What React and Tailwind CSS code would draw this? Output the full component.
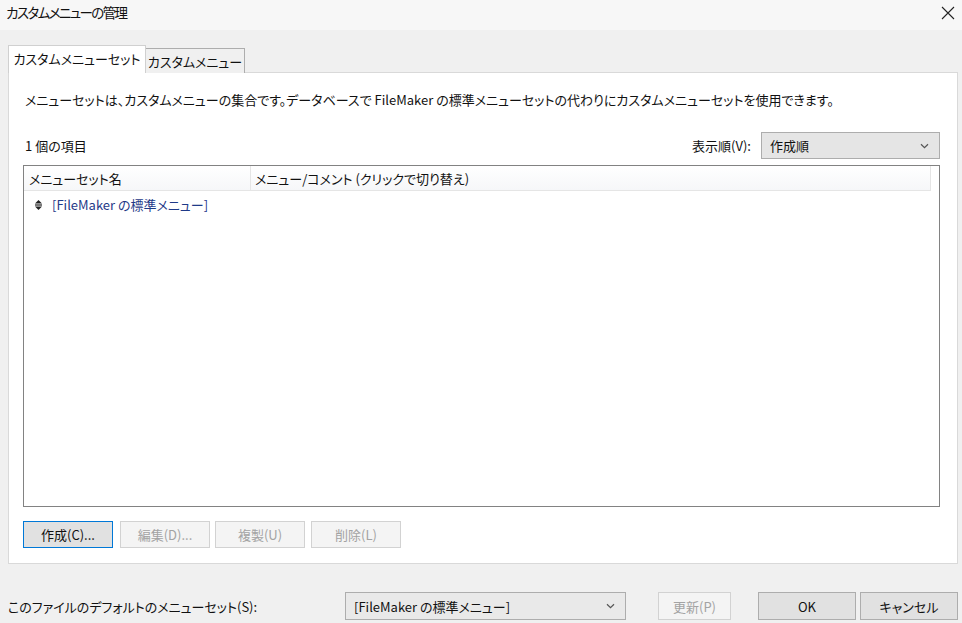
import React from "react";

const font = {
  fontFamily: '"Noto Sans CJK JP", "Noto Sans", sans-serif',
};

function Chevron() {
  return (
    <svg width="9" height="6" viewBox="0 0 9 6" className="shrink-0">
      <path d="M1 1.2 L4.5 4.6 L8 1.2" fill="none" stroke="#555" strokeWidth="1.2" />
    </svg>
  );
}

function Btn({ children, primary, disabled, className = "" }) {
  let cls =
    "flex items-center justify-center text-[13px] leading-none border whitespace-nowrap " + className + " ";
  if (disabled) cls += "bg-[#f4f4f4] border-[#d2d2d2] text-[#a3a3a3]";
  else if (primary) cls += "bg-[#e1e1e1] border-[#0078d7] text-[#111]";
  else cls += "bg-[#e1e1e1] border-[#adadad] text-[#111]";
  return <div className={cls}>{children}</div>;
}

export default function App() {
  return (
    <div
      className="w-[962px] h-[623px] bg-[#f0f0f0] flex flex-col overflow-hidden text-[#111] whitespace-nowrap [font-feature-settings:'palt']"
      style={font}
    >
      {/* title bar */}
      <div className="h-[30px] bg-[#f7f7f7] flex items-center justify-between pl-[6px] pr-[7px]">
        <div className="text-[13.5px] tracking-[-1.6px] leading-none text-[#111] -mt-[4px]">カスタムメニューの管理</div>
        <svg width="14" height="14" viewBox="0 0 14 14" className="-mt-[4px]">
          <path d="M1 1 L13 13 M13 1 L1 13" stroke="#222" strokeWidth="1.1" />
        </svg>
      </div>

      {/* tabs */}
      <div className="mt-[15px] pl-[8px] flex items-end h-[28px] relative z-10">
        <div className="h-[28px] w-[138px] bg-white border border-b-0 border-[#d0d0d0] flex items-center justify-center text-[13px] leading-none pb-[2px]">
          カスタムメニューセット
        </div>
        <div className="h-[25px] w-[99px] bg-[#f0f0f0] border border-l-0 border-b-0 border-[#adadad] flex items-center justify-center text-[13px] leading-none">
          カスタムメニュー
        </div>
      </div>

      {/* panel */}
      <div className="ml-[8px] w-[950px] h-[492px] -mt-[1px] bg-white border border-[#d9d9d9] flex flex-col pl-[14px] pr-[17px]">
        <div className="mt-[15px] h-[22px] flex items-center pl-[2px] text-[13px] leading-none">
          メニューセットは、カスタムメニューの集合です。データベースで FileMaker の標準メニューセットの代わりにカスタムメニューセットを使用できます。
        </div>

        <div className="mt-[22px] h-[27px] flex items-center justify-between">
          <div className="pl-[2px] text-[13px] leading-none">1 個の項目</div>
          <div className="flex items-center gap-[10px]">
            <span className="text-[13px] leading-none">表示順(V):</span>
            <div className="w-[179px] h-[27px] bg-[#e5e5e5] border border-[#adadad] flex items-center justify-between pl-[8px] pr-[10px]">
              <span className="text-[13px] leading-none">作成順</span>
              <Chevron />
            </div>
          </div>
        </div>

        {/* list */}
        <div className="mt-[6px] h-[342px] border border-[#828282] bg-white flex flex-col">
          <div className="h-[25px] flex border-b border-[#e5e5e5] bg-gradient-to-b from-white to-[#f6f7f9] mr-[8px] border-r">
            <div className="w-[227px] border-r border-[#e5e5e5] flex items-center pl-[5px] text-[13px] leading-none">
              メニューセット名
            </div>
            <div className="flex-1 flex items-center pl-[4px] text-[13px] leading-none">
              メニュー/コメント (クリックで切り替え)
            </div>
          </div>
          <div className="h-[27px] flex items-center pl-[11px] gap-[10px]">
            <svg width="7" height="10" viewBox="0 0 7 10">
              <path d="M3.5 0 L7 3.5 L0 3.5 Z" fill="#222" />
              <rect x="0" y="4.4" width="7" height="1.2" fill="#222" />
              <path d="M0 6.5 L7 6.5 L3.5 10 Z" fill="#222" />
            </svg>
            <span className="text-[13px] leading-none text-[#1f3a88]">[FileMaker の標準メニュー]</span>
          </div>
        </div>

        {/* buttons */}
        <div className="mt-[14px] flex">
          <Btn primary className="w-[90px] h-[27px]">作成(C)...</Btn>
          <Btn disabled className="w-[90px] h-[27px] ml-[7px]">編集(D)...</Btn>
          <Btn disabled className="w-[90px] h-[27px] ml-[5px]">複製(U)</Btn>
          <Btn disabled className="w-[90px] h-[27px] ml-[6px]">削除(L)</Btn>
        </div>
      </div>

      {/* footer */}
      <div className="mt-[28px] flex items-center h-[28px]">
        <div className="pl-[8px] w-[345px] text-[13px] leading-none">
          このファイルのデフォルトのメニューセット(S):
        </div>
        <div className="w-[281px] h-[28px] bg-[#e9e9e9] border border-[#adadad] flex items-center justify-between pl-[8px] pr-[10px]">
          <span className="text-[13px] leading-none">[FileMaker の標準メニュー]</span>
          <Chevron />
        </div>
        <Btn disabled className="w-[73px] ml-[32px] h-[28px]">更新(P)</Btn>
        <Btn className="w-[98px] ml-[27px] h-[28px]">OK</Btn>
        <Btn className="w-[98px] ml-[4px] h-[28px]">キャンセル</Btn>
      </div>
    </div>
  );
}
